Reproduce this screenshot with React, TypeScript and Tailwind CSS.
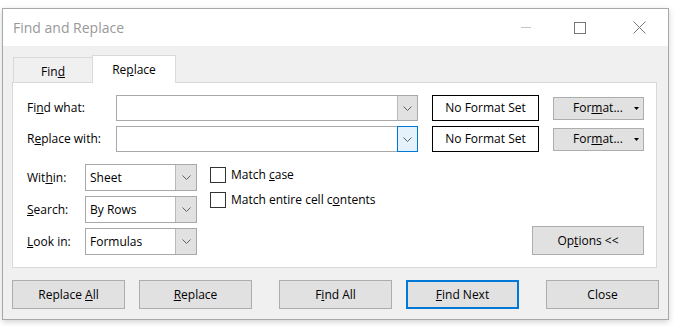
import React from "react";

const font = { fontFamily: '"Open Sans", "Noto Sans", sans-serif' };

function Chevron() {
  return (
    <svg width="9" height="5" viewBox="0 0 9 5" className="block">
      <polyline points="0.5,0.5 4.5,4.5 8.5,0.5" fill="none" stroke="#606060" strokeWidth="1" />
    </svg>
  );
}

function Combo({ active }: { active?: boolean }) {
  return (
    <div className="flex h-[26px] w-[302px] border border-[#a9a9a9] bg-white">
      <div className="flex-1" />
      {active ? (
        <div className="-my-px -mr-px flex w-[21px] items-center justify-center border border-[#0078d7] bg-[#e5f1fb]">
          <Chevron />
        </div>
      ) : (
        <div className="flex w-[20px] items-center justify-center border-l border-[#b9b9b9] bg-[#e1e1e1]">
          <Chevron />
        </div>
      )}
    </div>
  );
}

function Select({ value }: { value: string }) {
  return (
    <div className="flex h-[27px] w-[112px] border border-[#a9a9a9] bg-white">
      <div className="flex flex-1 items-center pl-[4px] text-[12px] text-black">{value}</div>
      <div className="flex w-[21px] items-center justify-center border-l border-[#b9b9b9] bg-[#e1e1e1]">
        <Chevron />
      </div>
    </div>
  );
}

function Button({ children, primary }: { children: React.ReactNode; primary?: boolean }) {
  return (
    <div
      className={`flex h-[29px] w-[113px] items-center justify-center bg-[#e1e1e1] text-[12px] text-black ${
        primary ? "border-2 border-[#0078d7]" : "border border-[#adadad]"
      }`}
    >
      <span>{children}</span>
    </div>
  );
}

function Check({ children }: { children: React.ReactNode }) {
  return (
    <div className="flex h-[16px] items-center">
      <div className="h-[16px] w-[16px] border border-[#333333] bg-white" />
      <span className="ml-[5px] text-[12px] leading-none text-black">{children}</span>
    </div>
  );
}

export default function App() {
  return (
    <div className="h-[326px] w-[676px] overflow-hidden bg-white pl-[2px] pt-[8px]" style={font}>
      <div className="flex h-[312px] w-[667px] flex-col border border-[#a8a8a8] bg-[#f0f0f0] shadow-[0_2px_6px_rgba(0,0,0,0.18)]">
        {/* Title bar */}
        <div className="flex h-[37px] items-center bg-white pl-[10px]">
          <span className="text-[14px] text-[#999999]">Find and Replace</span>
          <div className="ml-auto flex items-center pr-[22px]">
            <div className="h-px w-[10px] bg-[#c4c4c4]" />
            <div className="ml-[43px] h-[12px] w-[12px] border border-[#777777]" />
            <svg width="13" height="13" viewBox="0 0 13 13" className="ml-[47px] block">
              <path d="M0.5 0.5 L12.5 12.5 M12.5 0.5 L0.5 12.5" stroke="#777777" strokeWidth="1" />
            </svg>
          </div>
        </div>

        {/* Body */}
        <div className="flex flex-1 flex-col pl-[9px] pt-[9px]">
          {/* Tabs */}
          <div className="flex h-[27px] items-end pl-[1px]">
            <div className="flex h-[25px] w-[79px] items-center justify-center border-l border-t border-[#d9d9d9] pt-[4px] text-[12px] text-black">
              <span>
                Fin<u>d</u>
              </span>
            </div>
            <div className="relative z-10 -mb-px flex h-[28px] w-[84px] items-center justify-center border border-b-0 border-[#d9d9d9] bg-white pt-[1px] text-[12px] text-black">
              <span>
                Re<u>p</u>lace
              </span>
            </div>
          </div>

          {/* Panel */}
          <div className="flex h-[186px] w-[645px] flex-col border border-[#d9d9d9] bg-white pl-[14px] pr-[12px] pt-[12px]">
            <div className="flex flex-col gap-[5px]">
              <div className="flex items-center">
                <div className="w-[89px] text-[12px] text-black">
                  Fi<u>n</u>d what:
                </div>
                <Combo />
                <div className="ml-[14px] flex h-[26px] w-[107px] items-center justify-center border border-black text-[12px] text-black">
                  No Format Set
                </div>
                <div className="ml-[14px] flex h-[23px] w-[91px] items-center border border-[#adadad] bg-[#e1e1e1] pl-[19px] pr-[4px] text-[12px] text-black">
                  <span>
                    For<u>m</u>at...
                  </span>
                  <svg width="5" height="3" viewBox="0 0 5 3" className="ml-auto block">
                    <polygon points="0,0 5,0 2.5,3" fill="#000" />
                  </svg>
                </div>
              </div>
              <div className="flex items-center">
                <div className="w-[89px] text-[12px] text-black">
                  R<u>e</u>place with:
                </div>
                <Combo active />
                <div className="ml-[14px] flex h-[26px] w-[107px] items-center justify-center border border-black text-[12px] text-black">
                  No Format Set
                </div>
                <div className="ml-[14px] flex h-[23px] w-[91px] items-center border border-[#adadad] bg-[#e1e1e1] pl-[19px] pr-[4px] text-[12px] text-black">
                  <span>
                    For<u>m</u>at...
                  </span>
                  <svg width="5" height="3" viewBox="0 0 5 3" className="ml-auto block">
                    <polygon points="0,0 5,0 2.5,3" fill="#000" />
                  </svg>
                </div>
              </div>
            </div>

            <div className="mt-[12px] flex items-end">
              <div className="flex flex-col gap-[5px]">
                <div className="flex items-center">
                  <div className="w-[58px] text-[12px] text-black">
                    Wit<u>h</u>in:
                  </div>
                  <Select value="Sheet" />
                </div>
                <div className="flex items-center">
                  <div className="w-[58px] text-[12px] text-black">
                    <u>S</u>earch:
                  </div>
                  <Select value="By Rows" />
                </div>
                <div className="flex items-center">
                  <div className="w-[58px] text-[12px] text-black">
                    <u>L</u>ook in:
                  </div>
                  <Select value="Formulas" />
                </div>
              </div>

              <div className="ml-[13px] flex flex-col gap-[9px] self-start pt-[3px]">
                <Check>
                  Match <u>c</u>ase
                </Check>
                <Check>
                  Match entire cell c<u>o</u>ntents
                </Check>
              </div>

              <div className="ml-auto flex h-[29px] w-[112px] items-center justify-center border border-[#adadad] bg-[#e1e1e1] text-[12px] text-black">
                <span>
                  Op<u>t</u>ions &lt;&lt;
                </span>
              </div>
            </div>
          </div>

          {/* Bottom buttons */}
          <div className="mt-[12px] flex">
            <Button>
              Replace <u>A</u>ll
            </Button>
            <div className="ml-[14px]">
              <Button>
                <u>R</u>eplace
              </Button>
            </div>
            <div className="ml-[27px]">
              <Button>
                F<u>i</u>nd All
              </Button>
            </div>
            <div className="ml-[14px]">
              <Button primary>
                <u>F</u>ind Next
              </Button>
            </div>
            <div className="ml-[27px]">
              <Button>Close</Button>
            </div>
          </div>
        </div>
      </div>
    </div>
  );
}
